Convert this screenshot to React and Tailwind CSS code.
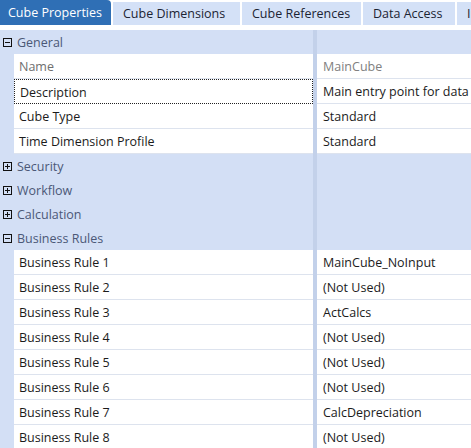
import React from "react";

const TABS = [
  { label: "Cube Properties", w: "w-[111px]", active: true },
  { label: "Cube Dimensions", w: "w-[127px]" },
  { label: "Cube References", w: "w-[119px]" },
  { label: "Data Access", w: "w-[92px]" },
  { label: "Intersections", w: "w-[60px]" },
];

const RULES = [
  "MainCube_NoInput",
  "(Not Used)",
  "ActCalcs",
  "(Not Used)",
  "(Not Used)",
  "(Not Used)",
  "CalcDepreciation",
  "(Not Used)",
];

function Expander({ open }) {
  return (
    <svg width="9" height="9" viewBox="0 0 9 9" className="shrink-0">
      <rect x="0.5" y="0.5" width="8" height="8" fill="none" stroke="#111" />
      <line x1="2" y1="4.5" x2="7" y2="4.5" stroke="#111" />
      {!open && <line x1="4.5" y1="2" x2="4.5" y2="7" stroke="#111" />}
    </svg>
  );
}

function Group({ label, open }) {
  return (
    <div className="flex h-[24px] bg-[#d3dff5]">
      <div className="flex w-[313px] items-center gap-[5px] pl-[3px] pt-[1px] text-[#4b5877]">
        <Expander open={open} />
        <span className="pt-[1px]">{label}</span>
      </div>
      <div className="w-[4px] bg-[#c3d1ea]" />
      <div className="flex-1" />
    </div>
  );
}

function Row({ label, value, muted, focused }) {
  return (
    <div className="flex h-[25px]">
      <div className="w-[14px] bg-[#d3dff5]" />
      <div
        className={`flex w-[299px] items-center border-b bg-white pl-[5px] pt-[3px] ${
          focused ? "border border-dotted border-[#222] pl-[4px]" : "border-[#dde3ee]"
        } ${muted ? "text-[#6e6e6e]" : "text-[#1b1b1b]"}`}
      >
        {label}
      </div>
      <div className="w-[4px] bg-[#c3d1ea]" />
      <div
        className={`flex flex-1 items-center overflow-hidden whitespace-nowrap border-b border-[#dde3ee] bg-white pl-[6px] pt-[3px] ${
          muted ? "text-[#808080]" : "text-[#1b1b1b]"
        }`}
      >
        {value}
      </div>
    </div>
  );
}

export default function App() {
  return (
    <div
      className="h-[448px] w-[471px] overflow-hidden bg-white text-[12.5px]"
      style={{ fontFamily: '"Open Sans", "Noto Sans", sans-serif' }}
    >
      <div className="flex h-[25px] gap-[2px] overflow-hidden whitespace-nowrap">
        {TABS.map((t) =>
          t.active ? (
            <div
              key={t.label}
              className={`${t.w} flex shrink-0 items-center rounded-tr-[4px] bg-[#2f6fb5] pl-[8px] pt-[1px] text-white`}
            >
              {t.label}
            </div>
          ) : (
            <div
              key={t.label}
              className={`${t.w} mt-[2px] flex shrink-0 items-center bg-[#d4e1f7] pl-[10px] pt-[1px] text-[#1c2433]`}
            >
              {t.label}
            </div>
          )
        )}
      </div>
      <div className="h-[5px]" />
      <Group label="General" open />
      <Row label="Name" value="MainCube" muted />
      <Row label="Description" value="Main entry point for data" focused />
      <Row label="Cube Type" value="Standard" />
      <Row label="Time Dimension Profile" value="Standard" />
      <Group label="Security" />
      <Group label="Workflow" />
      <Group label="Calculation" />
      <Group label="Business Rules" open />
      {RULES.map((v, i) => (
        <Row key={i} label={`Business Rule ${i + 1}`} value={v} />
      ))}
    </div>
  );
}
